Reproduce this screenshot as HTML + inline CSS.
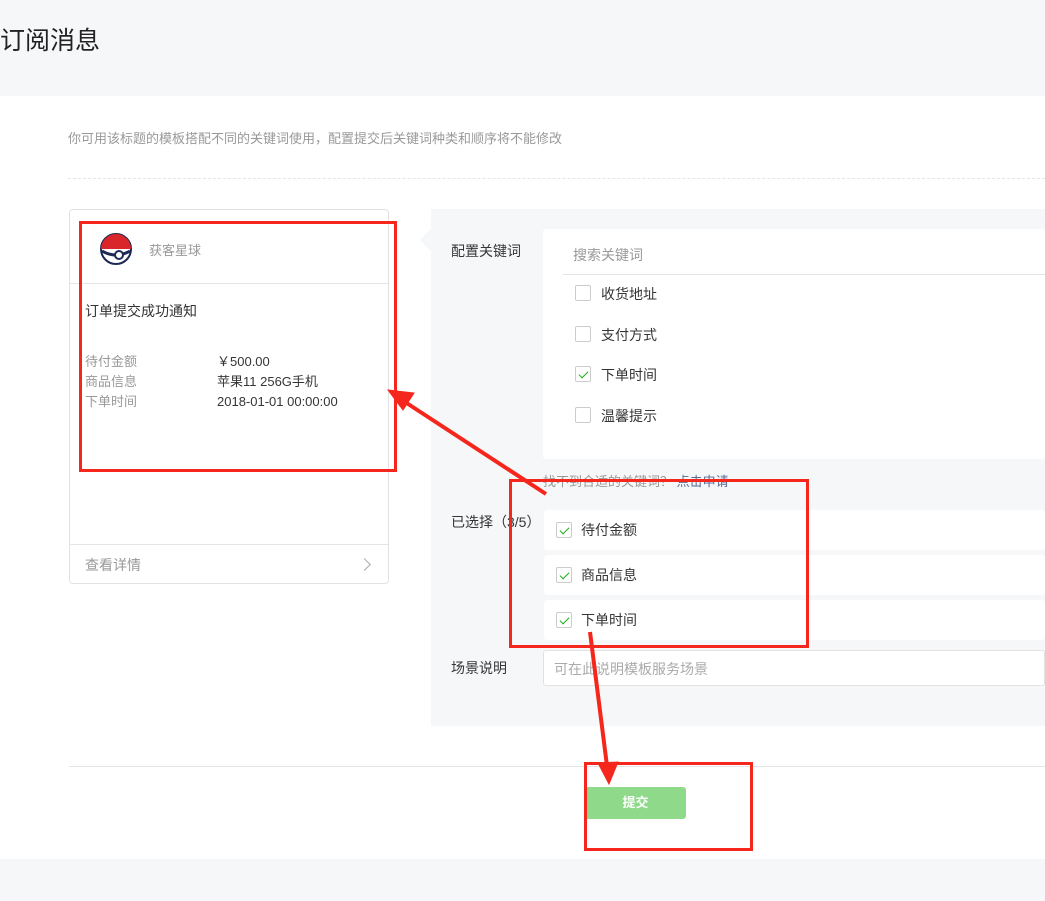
<!DOCTYPE html>
<html><head><meta charset="utf-8"><style>
*{box-sizing:border-box;margin:0;padding:0}
body{width:1045px;height:901px;background:#f6f7f9;font-family:"Liberation Sans","Noto Sans CJK SC",sans-serif;position:relative;overflow:hidden;color:#333}
.a{position:absolute}
.cb{position:absolute;width:16px;height:16px;border:1px solid #ccc;background:#fff;border-radius:2px}
.cb.on::after{content:"";position:absolute;left:5px;top:2px;width:4px;height:8px;border:solid #1aad19;border-width:0 1.5px 1.5px 0;transform:rotate(45deg)}
.t{position:absolute;font-size:14px;color:#353535}
.g{color:#999}
.rb{position:absolute;border:3px solid #f5261b}
</style></head><body>
<div class="a" style="left:0;top:21px;font-size:25px;color:#222">订阅消息</div>
<div class="a" style="left:0;top:96px;width:1045px;height:763px;background:#fff"></div>
<div class="a g" style="left:68px;top:128px;font-size:13px">你可用该标题的模板搭配不同的关键词使用，配置提交后关键词种类和顺序将不能修改</div>
<div class="a" style="left:68px;top:178px;width:977px;border-top:1px dashed #e5e5e5"></div>
<div class="a" style="left:69px;top:209px;width:320px;height:375px;border:1px solid #e2e2e2;border-radius:4px"></div>
<div class="a" style="left:70px;top:283px;width:318px;border-top:1px solid #e5e5e5"></div>
<div class="a" style="left:70px;top:544px;width:318px;border-top:1px solid #e5e5e5"></div>
<svg class="a" style="left:100px;top:233px" width="32" height="32"><circle cx="16" cy="16" r="15" fill="#fff" stroke="#1e2a55" stroke-width="2"/><path d="M1 16A15 15 0 0 1 31 16Z" fill="#d9262b"/><path d="M2 18Q16 26 30 18" stroke="#1e2a55" stroke-width="3" fill="none"/><circle cx="19" cy="22" r="4" fill="#fff" stroke="#1e2a55" stroke-width="2"/></svg>
<div class="a g" style="left:149px;top:240px;font-size:13px">获客星球</div>
<div class="a" style="left:85px;top:301px;font-size:14px">订单提交成功通知</div>
<div class="a g" style="left:85px;top:352px;font-size:13px;line-height:20px">待付金额<br>商品信息<br>下单时间</div>
<div class="a" style="left:217px;top:352px;font-size:13px;line-height:20px;color:#353535">￥500.00<br>苹果11 256G手机<br>2018-01-01 00:00:00</div>
<div class="a g" style="left:85px;top:555px;font-size:14px">查看详情</div>
<div class="a" style="left:360px;top:560px;width:9px;height:9px;border:solid #aaa;border-width:1px 1px 0 0;transform:rotate(45deg)"></div>
<div class="a" style="left:431px;top:209px;width:614px;height:517px;background:#f6f7f9"></div>
<div class="a" style="left:423px;top:232px;width:16px;height:16px;background:#f6f7f9;transform:rotate(45deg)"></div>
<div class="t" style="left:451px;top:241px">配置关键词</div>
<div class="a" style="left:543px;top:229px;width:502px;height:230px;background:#fff;border-radius:3px"></div>
<div class="a g" style="left:573px;top:245px;font-size:14px">搜索关键词</div>
<div class="a" style="left:563px;top:274px;width:482px;border-top:1px solid #e5e5e5"></div>
<div class="cb" style="left:575px;top:285px"></div><div class="t" style="left:601px;top:284px">收货地址</div>
<div class="cb" style="left:575px;top:326px"></div><div class="t" style="left:601px;top:325px">支付方式</div>
<div class="cb on" style="left:575px;top:366px"></div><div class="t" style="left:601px;top:365px">下单时间</div>
<div class="cb" style="left:575px;top:407px"></div><div class="t" style="left:601px;top:406px">温馨提示</div>
<div class="a g" style="left:543px;top:471px;font-size:13px">找不到合适的关键词？ <span style="color:#576b95">点击申请</span></div>
<div class="t" style="left:451px;top:512px">已选择（3/5）</div>
<div class="a" style="left:544px;top:510px;width:501px;height:40px;background:#fff;border-radius:3px"></div>
<div class="a" style="left:544px;top:555px;width:501px;height:40px;background:#fff;border-radius:3px"></div>
<div class="a" style="left:544px;top:600px;width:501px;height:40px;background:#fff;border-radius:3px"></div>
<div class="cb on" style="left:556px;top:522px"></div><div class="t" style="left:581px;top:520px">待付金额</div>
<div class="cb on" style="left:556px;top:567px"></div><div class="t" style="left:581px;top:565px">商品信息</div>
<div class="cb on" style="left:556px;top:612px"></div><div class="t" style="left:581px;top:610px">下单时间</div>
<div class="t" style="left:451px;top:658px">场景说明</div>
<div class="a" style="left:543px;top:650px;width:502px;height:36px;background:#fff;border:1px solid #e2e2e2;border-radius:3px"></div>
<div class="a g" style="left:554px;top:659px;font-size:14px;color:#aaa">可在此说明模板服务场景</div>
<div class="a" style="left:69px;top:766px;width:976px;border-top:1px solid #e5e5e5"></div>
<div class="a" style="left:585px;top:787px;width:101px;height:32px;background:#8fd98b;border-radius:3px;color:#fff;font-size:13px;font-weight:bold;text-align:center;line-height:32px">提交</div>
<div class="rb" style="left:79px;top:221px;width:318px;height:251px"></div>
<div class="rb" style="left:509px;top:479px;width:300px;height:169px"></div>
<div class="rb" style="left:584px;top:762px;width:169px;height:89px"></div>
<svg class="a" style="left:0;top:0" width="1045" height="901"><g fill="#f5261b" stroke="#f5261b" stroke-width="4"><line x1="546" y1="494" x2="402" y2="400"/><path d="M388 390L414 393L403 410Z" stroke-width="1"/><line x1="590" y1="632" x2="607" y2="766"/><path d="M609 784L598 763L618 762Z" stroke-width="1"/></g></svg>
</body></html>
